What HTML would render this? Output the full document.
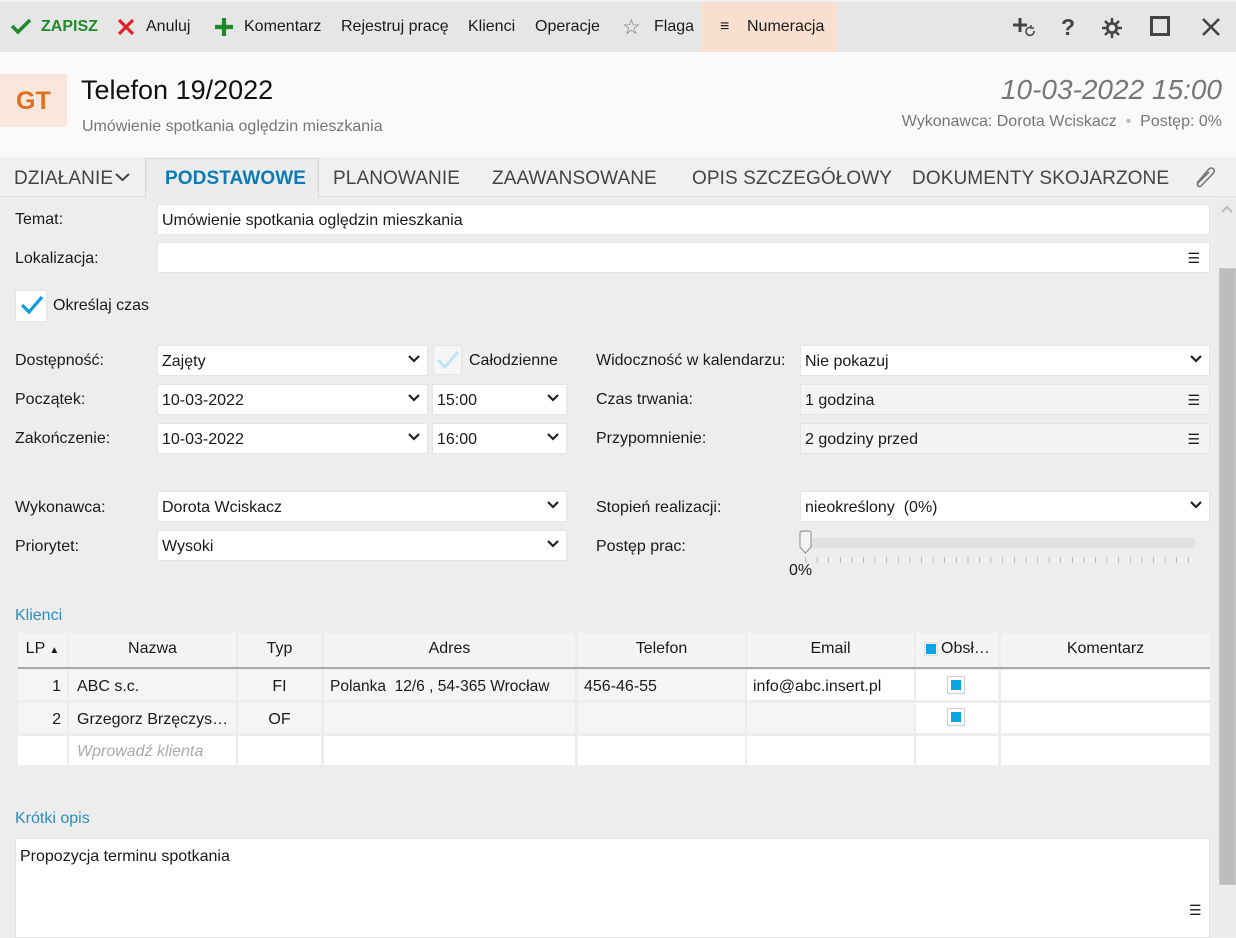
<!DOCTYPE html>
<html><head><meta charset="utf-8">
<style>
*{box-sizing:border-box;margin:0;padding:0}
body{width:1236px;height:937px;overflow:hidden;background:#ededed;font-family:"Liberation Sans",sans-serif;font-size:15px;color:#1a1a1a;position:relative}
.a{position:absolute;white-space:nowrap}
.tb{position:absolute;top:0;left:0;width:1236px;height:52px;background:#e6e6e6;border-top:2px solid #f0f0f0}
.tbi{position:absolute;top:16px;font-size:16px;color:#1a1a1a}
.hdr{position:absolute;top:52px;left:0;width:1236px;height:105px;background:#fafafa}
.tabs{position:absolute;top:157px;left:0;width:1236px;height:40px;background:#f0f0f0;border-bottom:1px solid #e2e2e2}
.tab{position:absolute;top:11px;font-size:19px;color:#444;letter-spacing:0.1px}
.in{position:absolute;background:#fff;border:1px solid #e4e4e4;height:31px;padding:7px 0 0 4px;font-size:16px;color:#1a1a1a;white-space:nowrap}
.ro{background:#f4f4f4}
.lab{position:absolute;font-size:16px;color:#1a1a1a;white-space:nowrap}
.chev{position:absolute;right:6px;top:6px;width:14px;height:14px}
.ham{position:absolute;right:9px;top:8px;font-size:14px;line-height:14px}
.cell{position:absolute;font-size:16px;white-space:nowrap;overflow:hidden}
.th{background:#f4f4f4;text-align:center;padding-top:7px}
.tr1{background:#f5f5f5;padding-top:8px}
.tw{background:#fff}
.cb{position:absolute;width:18px;height:18px;border:1px solid #ccc;background:#fff}
.cb i{position:absolute;left:3px;top:3px;width:10px;height:10px;background:#0aa4e0}
</style></head><body>
<div class="tb">
 <svg class="a" style="left:10px;top:15px" width="22" height="18" viewBox="0 0 22 18"><path d="M2 9 L8 15 L20 3" stroke="#1e8a2a" stroke-width="3.5" fill="none"/></svg>
 <div class="tbi" style="left:41px;color:#1e8a2a;font-weight:bold">ZAPISZ</div>
 <svg class="a" style="left:117px;top:16px" width="18" height="18" viewBox="0 0 18 18"><path d="M2 2L16 16M16 2L2 16" stroke="#e0222c" stroke-width="3.2"/></svg>
 <div class="tbi" style="left:146px">Anuluj</div>
 <svg class="a" style="left:214px;top:15px" width="20" height="20" viewBox="0 0 20 20"><path d="M10 1V19M1 10H19" stroke="#1e8a2a" stroke-width="4.2"/></svg>
 <div class="tbi" style="left:244px">Komentarz</div>
 <div class="tbi" style="left:341px">Rejestruj pracę</div>
 <div class="tbi" style="left:468px">Klienci</div>
 <div class="tbi" style="left:535px">Operacje</div>
 <div class="tbi" style="left:622px;top:13px;font-size:21px;color:#777">☆</div>
 <div class="tbi" style="left:654px">Flaga</div>
 <div class="a" style="left:702px;top:0;width:135px;height:50px;background:#f8dfcf"></div>
 <div class="tbi" style="left:720px">≡</div>
 <div class="tbi" style="left:747px">Numeracja</div>
 <svg class="a" style="left:1012px;top:14px" width="26" height="24" viewBox="0 0 26 24"><path d="M8 2V16M1 9H15" stroke="#444" stroke-width="3"/><path d="M22 15a4 4 0 1 1 -3 -3.5M19 9v3h3" stroke="#444" stroke-width="1.5" fill="none"/></svg>
 <div class="tbi" style="left:1061px;top:12px;font-size:23px;font-weight:bold;color:#444">?</div>
 <svg class="a" style="left:1101px;top:15px" width="22" height="22" viewBox="0 0 22 22"><g stroke="#444" stroke-width="2.6"><path d="M11 1V21M1 11H21M4 4L18 18M18 4L4 18"/></g><circle cx="11" cy="11" r="6" fill="#444"/><circle cx="11" cy="11" r="3.3" fill="#e6e6e6"/></svg>
 <div class="a" style="left:1150px;top:14px;width:20px;height:20px;border:3px solid #444"></div>
 <svg class="a" style="left:1201px;top:15px" width="20" height="20" viewBox="0 0 20 20"><path d="M2 2L18 18M18 2L2 18" stroke="#444" stroke-width="2.6"/></svg>
</div>
<div class="hdr">
 <div class="a" style="left:0;top:22px;width:67px;height:53px;background:#f9e7dd"></div>
 <div class="a" style="left:16px;top:35px;font-size:25px;font-weight:bold;color:#e07020">GT</div>
 <div class="a" style="left:81px;top:23px;font-size:27px;color:#111">Telefon 19/2022</div>
 <div class="a" style="left:82px;top:66px;font-size:16px;color:#777">Umówienie spotkania oględzin mieszkania</div>
 <div class="a" style="right:14px;top:22px;font-size:28px;font-style:italic;color:#777">10-03-2022 15:00</div>
 <div class="a" style="right:14px;top:61px;font-size:16px;color:#777">Wykonawca: Dorota Wciskacz <span style="color:#bbb">&nbsp;•&nbsp;</span> Postęp: 0%</div>
</div>
<div class="tabs">
 <div class="tab" style="left:14px">DZIAŁANIE</div>
 <svg class="a" style="left:115px;top:15px" width="15" height="10" viewBox="0 0 15 10"><path d="M1 2L7.5 8L14 2" stroke="#444" stroke-width="2" fill="none"/></svg>
 <div class="a" style="left:145px;top:1px;width:174px;height:40px;background:#ececec;border:1px solid #d8d8d8;border-bottom:none"></div>
 <div class="tab" style="left:165px;color:#0b7ab5;font-weight:bold">PODSTAWOWE</div>
 <div class="tab" style="left:333px">PLANOWANIE</div>
 <div class="tab" style="left:492px">ZAAWANSOWANE</div>
 <div class="tab" style="left:692px">OPIS SZCZEGÓŁOWY</div>
 <div class="tab" style="left:912px">DOKUMENTY SKOJARZONE</div>
 <svg class="a" style="left:1192px;top:8px" width="26" height="24" viewBox="0 0 26 24"><path d="M5 18L17 4a3 3 0 0 1 4.5 4L9 21a2 2 0 0 1-3-3L17 7" stroke="#777" stroke-width="1.6" fill="none"/></svg>
</div>
<!-- scrollbar -->
<div class="a" style="left:1217px;top:197px;width:19px;height:740px;background:#ececec"></div>
<svg class="a" style="left:1221px;top:205px" width="12" height="8" viewBox="0 0 12 8"><path d="M1 7L6 2L11 7" stroke="#bbb" stroke-width="2" fill="none"/></svg>
<div class="a" style="left:1219px;top:268px;width:17px;height:617px;background:#bdbdbd;border:1px solid #c8c8c8"></div>

<div class="lab" style="left:15px;top:211px">Temat:</div>
<div class="in" style="left:157px;top:204px;width:1053px">Umówienie spotkania oględzin mieszkania</div>
<div class="lab" style="left:15px;top:250px">Lokalizacja:</div>
<div class="in" style="left:157px;top:242px;width:1053px"><span class="ham">☰</span></div>
<div class="a" style="left:15px;top:290px;width:32px;height:32px;background:#fff;border:1px solid #e4e4e4"></div>
<svg class="a" style="left:20px;top:295px" width="24" height="20" viewBox="0 0 24 20"><path d="M2 10L9 17L22 2" stroke="#0a9ee0" stroke-width="3.2" fill="none"/></svg>
<div class="lab" style="left:53px;top:297px">Określaj czas</div>

<svg width="0" height="0" style="position:absolute"><defs><symbol id="cv" viewBox="0 0 14 14"><path d="M2 4L7 9L12 4" stroke="#222" stroke-width="2.2" fill="none"/></symbol></defs></svg>

<div class="lab" style="left:15px;top:352px">Dostępność:</div>
<div class="in" style="left:157px;top:345px;width:271px">Zajęty<svg class="chev"><use href="#cv"/></svg></div>
<div class="a" style="left:433px;top:345px;width:29px;height:30px;background:#f6f6f6;border:1px solid #e4e4e4"></div>
<svg class="a" style="left:436px;top:350px" width="24" height="20" viewBox="0 0 24 20"><path d="M2 10L9 17L22 2" stroke="#bfe4f4" stroke-width="3" fill="none"/></svg>
<div class="lab" style="left:469px;top:352px">Całodzienne</div>
<div class="lab" style="left:596px;top:352px">Widoczność w kalendarzu:</div>
<div class="in" style="left:800px;top:345px;width:410px">Nie pokazuj<svg class="chev"><use href="#cv"/></svg></div>

<div class="lab" style="left:15px;top:391px">Początek:</div>
<div class="in" style="left:157px;top:384px;width:271px">10-03-2022<svg class="chev"><use href="#cv"/></svg></div>
<div class="in" style="left:432px;top:384px;width:135px">15:00<svg class="chev"><use href="#cv"/></svg></div>
<div class="lab" style="left:596px;top:391px">Czas trwania:</div>
<div class="in ro" style="left:800px;top:384px;width:410px">1 godzina<span class="ham">☰</span></div>

<div class="lab" style="left:15px;top:430px">Zakończenie:</div>
<div class="in" style="left:157px;top:423px;width:271px">10-03-2022<svg class="chev"><use href="#cv"/></svg></div>
<div class="in" style="left:432px;top:423px;width:135px">16:00<svg class="chev"><use href="#cv"/></svg></div>
<div class="lab" style="left:596px;top:430px">Przypomnienie:</div>
<div class="in ro" style="left:800px;top:423px;width:410px">2 godziny przed<span class="ham">☰</span></div>

<div class="lab" style="left:15px;top:499px">Wykonawca:</div>
<div class="in" style="left:157px;top:491px;width:410px">Dorota Wciskacz<svg class="chev"><use href="#cv"/></svg></div>
<div class="lab" style="left:596px;top:499px">Stopień realizacji:</div>
<div class="in" style="left:800px;top:491px;width:410px">nieokreślony&nbsp; (0%)<svg class="chev"><use href="#cv"/></svg></div>
<div class="lab" style="left:15px;top:538px">Priorytet:</div>
<div class="in" style="left:157px;top:530px;width:410px">Wysoki<svg class="chev"><use href="#cv"/></svg></div>
<div class="lab" style="left:596px;top:538px">Postęp prac:</div>
<div class="a" style="left:800px;top:538px;width:395px;height:10px;background:#e2e2e2"></div>
<svg class="a" style="left:798px;top:530px" width="15" height="26" viewBox="0 0 15 26"><path d="M2 3a2 2 0 0 1 2-2h7a2 2 0 0 1 2 2v14l-5.5 6l-5.5-6z" fill="#f4f4f4" stroke="#999" stroke-width="1.2"/></svg>
<div class="a" style="left:805px;top:557px;width:390px;height:6px;background:repeating-linear-gradient(90deg,#bbb 0 1px,transparent 1px 11.6px)"></div>
<div class="lab" style="left:789px;top:562px">0%</div>

<div class="lab" style="left:15px;top:607px;color:#2a8fc0">Klienci</div>
<div class="a" style="left:18px;top:667px;width:1192px;height:2px;background:#a8a8a8"></div>
<div class="cell th" style="left:18px;top:633px;width:49px;height:34px">LP <span style="font-size:10px">▲</span></div>
<div class="cell th" style="left:69px;top:633px;width:167px;height:34px">Nazwa</div>
<div class="cell th" style="left:238px;top:633px;width:83px;height:34px">Typ</div>
<div class="cell th" style="left:324px;top:633px;width:251px;height:34px">Adres</div>
<div class="cell th" style="left:578px;top:633px;width:167px;height:34px">Telefon</div>
<div class="cell th" style="left:747px;top:633px;width:167px;height:34px">Email</div>
<div class="cell th" style="left:916px;top:633px;width:82px;height:34px;text-align:left;padding-left:25px">Obsł…</div>
<div class="a" style="left:926px;top:644px;width:10px;height:10px;background:#0aa4e0;outline:1px solid #ddd;outline-offset:1px"></div>
<div class="cell th" style="left:1001px;top:633px;width:209px;height:34px">Komentarz</div>

<div class="cell tr1" style="left:18px;top:670px;width:49px;height:30px;text-align:right;padding-right:6px">1</div>
<div class="cell tr1" style="left:69px;top:670px;width:167px;height:30px;padding-left:8px">ABC s.c.</div>
<div class="cell tr1" style="left:238px;top:670px;width:83px;height:30px;text-align:center">FI</div>
<div class="cell tr1" style="left:324px;top:670px;width:251px;height:30px;padding-left:6px;font-size:15.5px">Polanka&nbsp; 12/6 , 54-365 Wrocław</div>
<div class="cell tr1" style="left:578px;top:670px;width:167px;height:30px;padding-left:6px">456-46-55</div>
<div class="cell tr1 tw" style="left:747px;top:670px;width:167px;height:30px;padding-left:6px">info@abc.insert.pl</div>
<div class="cell tw" style="left:916px;top:670px;width:82px;height:30px"></div>
<div class="cb" style="left:947px;top:676px"><i></i></div>
<div class="cell tw" style="left:1001px;top:670px;width:209px;height:30px"></div>

<div class="cell tr1" style="left:18px;top:703px;width:49px;height:30px;text-align:right;padding-right:6px">2</div>
<div class="cell tr1" style="left:69px;top:703px;width:167px;height:30px;padding-left:8px">Grzegorz Brzęczys…</div>
<div class="cell tr1" style="left:238px;top:703px;width:83px;height:30px;text-align:center">OF</div>
<div class="cell tr1" style="left:324px;top:703px;width:251px;height:30px"></div>
<div class="cell tr1" style="left:578px;top:703px;width:167px;height:30px"></div>
<div class="cell tr1" style="left:747px;top:703px;width:167px;height:30px"></div>
<div class="cell tw" style="left:916px;top:703px;width:82px;height:30px"></div>
<div class="cb" style="left:947px;top:708px"><i></i></div>
<div class="cell tw" style="left:1001px;top:703px;width:209px;height:30px"></div>

<div class="cell tw" style="left:18px;top:736px;width:49px;height:29px"></div>
<div class="cell tw" style="left:69px;top:736px;width:167px;height:29px;padding:7px 0 0 8px;color:#aaa;font-style:italic">Wprowadź klienta</div>
<div class="cell tw" style="left:238px;top:736px;width:83px;height:29px"></div>
<div class="cell tw" style="left:324px;top:736px;width:251px;height:29px"></div>
<div class="cell tw" style="left:578px;top:736px;width:167px;height:29px"></div>
<div class="cell tw" style="left:747px;top:736px;width:167px;height:29px"></div>
<div class="cell tw" style="left:916px;top:736px;width:82px;height:29px"></div>
<div class="cell tw" style="left:1001px;top:736px;width:209px;height:29px"></div>

<div class="lab" style="left:15px;top:810px;color:#2a8fc0">Krótki opis</div>
<div class="a" style="left:15px;top:838px;width:1195px;height:100px;background:#fff;border:1px solid #e4e4e4"></div>
<div class="lab" style="left:20px;top:848px">Propozycja terminu spotkania</div>
<div class="a" style="left:1189px;top:902px;font-size:14px">☰</div>
</body></html>
